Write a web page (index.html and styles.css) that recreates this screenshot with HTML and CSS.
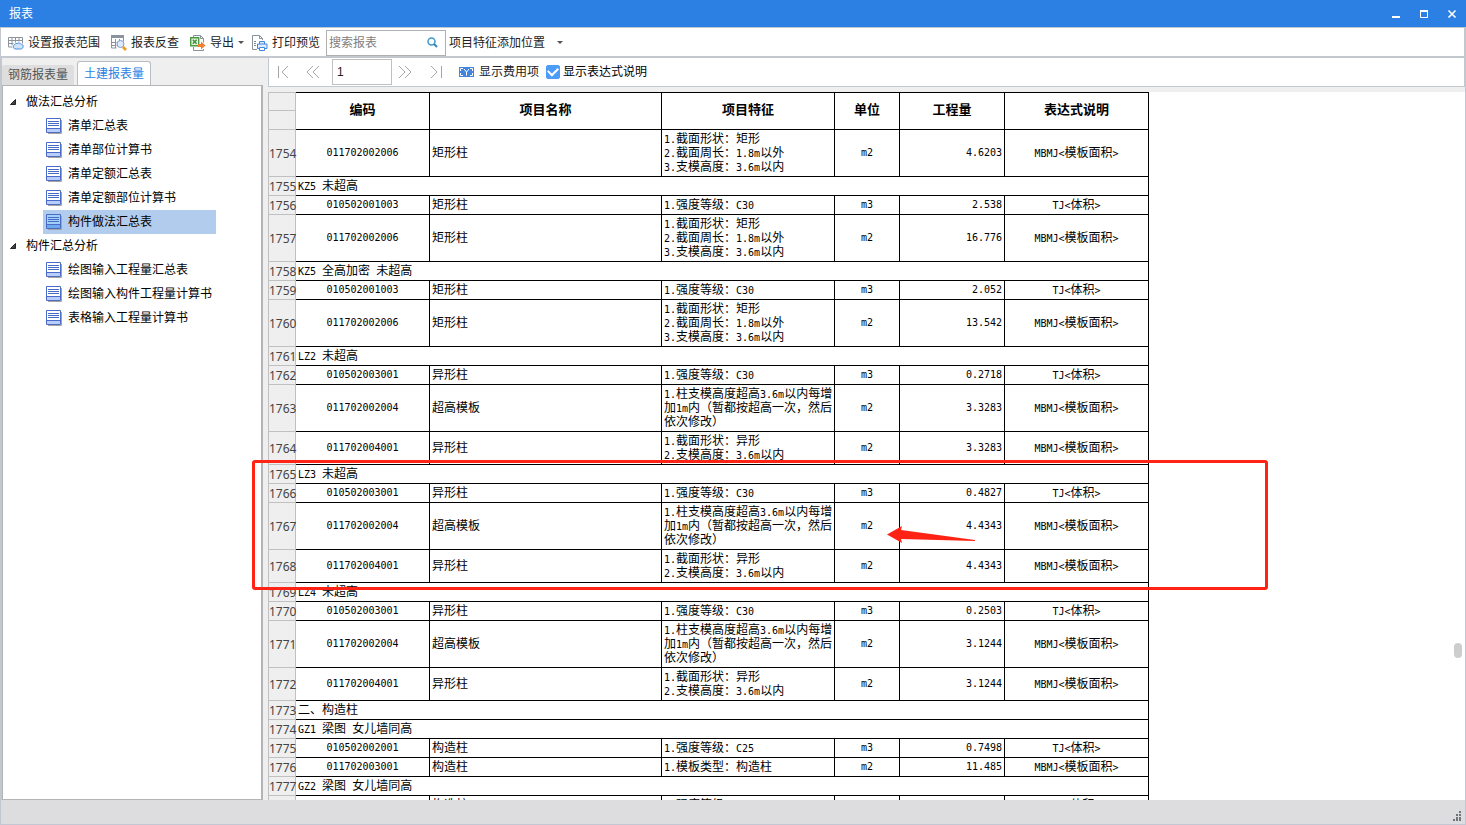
FILE: index.html
```html
<!DOCTYPE html>
<html lang="zh-CN">
<head>
<meta charset="utf-8">
<title>报表</title>
<link rel="stylesheet" href="styles.css">
</head>
<body>
<svg class="defs" aria-hidden="true">
  <symbol id="sheet" viewBox="0 0 16 16">
    <path d="M2 15.500h13.500V2" fill="none" stroke="#a4a4a4"/>
    <path class="sheet-page" d="M0 0h15v15H0z"/>
    <path class="sheet-foot" d="M1 10h13v4H1z"/>
    <path d="M.5.5h14v14H.5zM2 3.500h11M2 5.500h11M2 7.500h11M1 10.500h13" fill="none" stroke="#4a6cc4"/>
  </symbol>
</svg>
<div class="window">
  <header class="titlebar">
    <h1>报表</h1>
    <div class="window-buttons">
      <button type="button" aria-label="最小化"><svg width="10" height="10"><path d="M1 8h8" stroke="#fff" stroke-width="2"/></svg></button>
      <button type="button" aria-label="最大化"><svg width="10" height="10"><path d="M1.500 2v6.500h7V2" fill="none" stroke="#fff"/><path d="M1 2h8" stroke="#fff" stroke-width="2"/></svg></button>
      <button type="button" aria-label="关闭"><svg width="10" height="10"><path d="M1.500 1.500l7 7M8.500 1.500l-7 7" stroke="#fff" stroke-width="1.600"/></svg></button>
    </div>
  </header>

  <div class="toolbar">
    <button type="button" class="tool"><svg width="16" height="16"><path d="M.5 2.500h14v6M.5 2.500v9.500h4M.5 5.500h14M.5 8.500h5M4 2.500v8M7.500 2.500v5M11 2.500v4" fill="none" stroke="#8b949c"/><path d="M9 8.500c1.500-1 3-.6 3.500.5 2 .2 3 1.300 2.500 3-.3 1.500-1 2-2.500 2H8c-2 0-2.800-1-2.500-2.500.2-1.800 1.500-3 3.500-3z" fill="#cfe3fb" stroke="#4b8fdd"/></svg>设置报表范围</button>
    <button type="button" class="tool"><svg width="16" height="16"><path d="M.5 1.500h12v5M.5 1.500v11.500h5M.5 7.500h5M.5 10.500h5M4.500 4v9M8.500 4v2" fill="none" stroke="#8b949c"/><path d="M0 0h13v3H0z" fill="#8b949c"/><circle cx="9.500" cy="9" r="3.500" fill="#dcebff" stroke="#8798c8"/><path d="M12 12l3 3" stroke="#f19a1c" stroke-width="2.600"/></svg>报表反查</button>
    <button type="button" class="tool has-caret"><svg width="16" height="16"><path d="M3.500 3V.500h7l3 3v4M3.500 12v3.500h10V14M10.500.5v3h3" fill="none" stroke="#88929a"/><path d="M.7 2.700h8v8h-8z" fill="#e8f5e4" stroke="#4c9a41" stroke-width="1.400"/><path d="M2.800 4.700l3.800 4M6.600 4.700l-3.800 4" stroke="#3b9231" stroke-width="1.400"/><path d="M8 9h3V6.500l4.500 4-4.500 4V12H8z" fill="#f08030"/></svg>导出<span class="caret"></span></button>
    <button type="button" class="tool"><svg width="16" height="16"><path d="M5 14.500H.500v-14h7l3 3V5M7.500.5v3h3" fill="none" stroke="#88929a"/><path d="M3 6v5" stroke="#7d8790" stroke-dasharray="1 1" stroke-width="2"/><path d="M7.500 9V6.500h5V9M5.500 9h9.500v4.500H5.500z" fill="#dcebff" stroke="#3f86dc"/><path d="M7.500 12.500h5v3h-5z" fill="#fff" stroke="#3f86dc"/></svg>打印预览</button>
    <div class="search">
      <input type="text" placeholder="搜索报表" aria-label="搜索报表">
      <svg width="11" height="11"><circle cx="4.500" cy="4.500" r="3.500" fill="none" stroke="#4099cc" stroke-width="1.500"/><path d="M7 7l3 3" stroke="#3485b8" stroke-width="2"/></svg>
    </div>
    <button type="button" class="tool position-menu">项目特征添加位置<span class="caret"></span></button>
  </div>

  <main class="workspace">
    <aside class="sidebar">
      <div class="tabs" role="tablist">
        <button type="button" role="tab" aria-selected="false" class="tab">钢筋报表量</button>
        <button type="button" role="tab" aria-selected="true" class="tab active">土建报表量</button>
      </div>
      <nav class="tree">
        <h2><svg width="8" height="8"><path d="M6.500 1.500v5h-5z" fill="#444" stroke="#222"/></svg>做法汇总分析</h2>
        <ul>
          <li><a href="#"><svg width="16" height="16"><use href="#sheet"/></svg>清单汇总表</a></li>
          <li><a href="#"><svg width="16" height="16"><use href="#sheet"/></svg>清单部位计算书</a></li>
          <li><a href="#"><svg width="16" height="16"><use href="#sheet"/></svg>清单定额汇总表</a></li>
          <li><a href="#"><svg width="16" height="16"><use href="#sheet"/></svg>清单定额部位计算书</a></li>
          <li><a href="#" class="selected" aria-current="page"><svg width="16" height="16"><use href="#sheet"/></svg>构件做法汇总表</a></li>
        </ul>
        <h2><svg width="8" height="8"><path d="M6.500 1.500v5h-5z" fill="#444" stroke="#222"/></svg>构件汇总分析</h2>
        <ul>
          <li><a href="#"><svg width="16" height="16"><use href="#sheet"/></svg>绘图输入工程量汇总表</a></li>
          <li><a href="#"><svg width="16" height="16"><use href="#sheet"/></svg>绘图输入构件工程量计算书</a></li>
          <li><a href="#"><svg width="16" height="16"><use href="#sheet"/></svg>表格输入工程量计算书</a></li>
        </ul>
      </nav>
    </aside>

    <section class="report">
      <div class="pager">
        <button type="button" class="page-button" aria-label="首页"><svg width="14" height="14"><path d="M2.500 1v12M12 1L6 7l6 6" fill="none" stroke="#a6a6a6"/></svg></button>
        <button type="button" class="page-button" aria-label="上一页"><svg width="14" height="14"><path d="M7 1L1 7l6 6M13 1L7 7l6 6" fill="none" stroke="#a6a6a6"/></svg></button>
        <input class="page-number" type="text" value="1" aria-label="页码">
        <button type="button" class="page-button" aria-label="下一页"><svg width="14" height="14"><path d="M1 1l6 6-6 6M7 1l6 6-6 6" fill="none" stroke="#a6a6a6"/></svg></button>
        <button type="button" class="page-button" aria-label="末页"><svg width="14" height="14"><path d="M2 1l6 6-6 6M12.500 1v12" fill="none" stroke="#a6a6a6"/></svg></button>
        <button type="button" class="tool cost"><svg width="15" height="10"><path d="M0 0h15v10H0z" fill="#4285dc"/><path d="M4 1.500H1.500V4M1.500 6v2.500H4M11 1.500h2.500V4M13.500 6v2.500H11M5 2l2.500 3L10 2M7.500 5v3.500" fill="none" stroke="#fff"/></svg>显示费用项</button>
        <label class="check"><input type="checkbox" checked>显示表达式说明</label>
      </div>

      <div class="sheet-view">
        <table class="sheet">
          <colgroup><col class="c-row"><col class="c-code"><col class="c-name"><col class="c-feature"><col class="c-unit"><col class="c-amount"><col class="c-note"></colgroup>
          <thead>
            <tr><td class="row-no"></td><th rowspan="2">编码</th><th rowspan="2">项目名称</th><th rowspan="2">项目特征</th><th rowspan="2">单位</th><th rowspan="2">工程量</th><th rowspan="2">表达式说明</th></tr>
            <tr><td class="row-no"></td></tr>
          </thead>
          <tbody>
            <tr><td class="row-no">1754</td><td class="code">011702002006</td><td>矩形柱</td><td><span class="a">1.</span>截面形状：矩形<br><span class="a">2.</span>截面周长：<span class="a">1.8m</span>以外<br><span class="a">3.</span>支模高度：<span class="a">3.6m</span>以内</td><td class="unit">m2</td><td class="amount">4.6203</td><td class="note"><span class="a">MBMJ&lt;</span>模板面积<span class="a">&gt;</span></td></tr>
            <tr><td class="row-no">1755</td><td colspan="6"><span class="a">KZ5 </span>未超高</td></tr>
            <tr><td class="row-no">1756</td><td class="code">010502001003</td><td>矩形柱</td><td><span class="a">1.</span>强度等级：<span class="a">C30</span></td><td class="unit">m3</td><td class="amount">2.538</td><td class="note"><span class="a">TJ&lt;</span>体积<span class="a">&gt;</span></td></tr>
            <tr><td class="row-no">1757</td><td class="code">011702002006</td><td>矩形柱</td><td><span class="a">1.</span>截面形状：矩形<br><span class="a">2.</span>截面周长：<span class="a">1.8m</span>以外<br><span class="a">3.</span>支模高度：<span class="a">3.6m</span>以内</td><td class="unit">m2</td><td class="amount">16.776</td><td class="note"><span class="a">MBMJ&lt;</span>模板面积<span class="a">&gt;</span></td></tr>
            <tr><td class="row-no">1758</td><td colspan="6"><span class="a">KZ5 </span>全高加密<span class="a"> </span>未超高</td></tr>
            <tr><td class="row-no">1759</td><td class="code">010502001003</td><td>矩形柱</td><td><span class="a">1.</span>强度等级：<span class="a">C30</span></td><td class="unit">m3</td><td class="amount">2.052</td><td class="note"><span class="a">TJ&lt;</span>体积<span class="a">&gt;</span></td></tr>
            <tr><td class="row-no">1760</td><td class="code">011702002006</td><td>矩形柱</td><td><span class="a">1.</span>截面形状：矩形<br><span class="a">2.</span>截面周长：<span class="a">1.8m</span>以外<br><span class="a">3.</span>支模高度：<span class="a">3.6m</span>以内</td><td class="unit">m2</td><td class="amount">13.542</td><td class="note"><span class="a">MBMJ&lt;</span>模板面积<span class="a">&gt;</span></td></tr>
            <tr><td class="row-no">1761</td><td colspan="6"><span class="a">LZ2 </span>未超高</td></tr>
            <tr><td class="row-no">1762</td><td class="code">010502003001</td><td>异形柱</td><td><span class="a">1.</span>强度等级：<span class="a">C30</span></td><td class="unit">m3</td><td class="amount">0.2718</td><td class="note"><span class="a">TJ&lt;</span>体积<span class="a">&gt;</span></td></tr>
            <tr><td class="row-no">1763</td><td class="code">011702002004</td><td>超高模板</td><td><span class="a">1.</span>柱支模高度超高<span class="a">3.6m</span>以内每增<br>加<span class="a">1m</span>内（暂都按超高一次，然后<br>依次修改）</td><td class="unit">m2</td><td class="amount">3.3283</td><td class="note"><span class="a">MBMJ&lt;</span>模板面积<span class="a">&gt;</span></td></tr>
            <tr><td class="row-no">1764</td><td class="code">011702004001</td><td>异形柱</td><td><span class="a">1.</span>截面形状：异形<br><span class="a">2.</span>支模高度：<span class="a">3.6m</span>以内</td><td class="unit">m2</td><td class="amount">3.3283</td><td class="note"><span class="a">MBMJ&lt;</span>模板面积<span class="a">&gt;</span></td></tr>
            <tr><td class="row-no">1765</td><td colspan="6"><span class="a">LZ3 </span>未超高</td></tr>
            <tr><td class="row-no">1766</td><td class="code">010502003001</td><td>异形柱</td><td><span class="a">1.</span>强度等级：<span class="a">C30</span></td><td class="unit">m3</td><td class="amount">0.4827</td><td class="note"><span class="a">TJ&lt;</span>体积<span class="a">&gt;</span></td></tr>
            <tr><td class="row-no">1767</td><td class="code">011702002004</td><td>超高模板</td><td><span class="a">1.</span>柱支模高度超高<span class="a">3.6m</span>以内每增<br>加<span class="a">1m</span>内（暂都按超高一次，然后<br>依次修改）</td><td class="unit">m2</td><td class="amount">4.4343</td><td class="note"><span class="a">MBMJ&lt;</span>模板面积<span class="a">&gt;</span></td></tr>
            <tr><td class="row-no">1768</td><td class="code">011702004001</td><td>异形柱</td><td><span class="a">1.</span>截面形状：异形<br><span class="a">2.</span>支模高度：<span class="a">3.6m</span>以内</td><td class="unit">m2</td><td class="amount">4.4343</td><td class="note"><span class="a">MBMJ&lt;</span>模板面积<span class="a">&gt;</span></td></tr>
            <tr><td class="row-no">1769</td><td colspan="6"><span class="a">LZ4 </span>未超高</td></tr>
            <tr><td class="row-no">1770</td><td class="code">010502003001</td><td>异形柱</td><td><span class="a">1.</span>强度等级：<span class="a">C30</span></td><td class="unit">m3</td><td class="amount">0.2503</td><td class="note"><span class="a">TJ&lt;</span>体积<span class="a">&gt;</span></td></tr>
            <tr><td class="row-no">1771</td><td class="code">011702002004</td><td>超高模板</td><td><span class="a">1.</span>柱支模高度超高<span class="a">3.6m</span>以内每增<br>加<span class="a">1m</span>内（暂都按超高一次，然后<br>依次修改）</td><td class="unit">m2</td><td class="amount">3.1244</td><td class="note"><span class="a">MBMJ&lt;</span>模板面积<span class="a">&gt;</span></td></tr>
            <tr><td class="row-no">1772</td><td class="code">011702004001</td><td>异形柱</td><td><span class="a">1.</span>截面形状：异形<br><span class="a">2.</span>支模高度：<span class="a">3.6m</span>以内</td><td class="unit">m2</td><td class="amount">3.1244</td><td class="note"><span class="a">MBMJ&lt;</span>模板面积<span class="a">&gt;</span></td></tr>
            <tr><td class="row-no">1773</td><td colspan="6">二、构造柱</td></tr>
            <tr><td class="row-no">1774</td><td colspan="6"><span class="a">GZ1 </span>梁图<span class="a"> </span>女儿墙同高</td></tr>
            <tr><td class="row-no">1775</td><td class="code">010502002001</td><td>构造柱</td><td><span class="a">1.</span>强度等级：<span class="a">C25</span></td><td class="unit">m3</td><td class="amount">0.7498</td><td class="note"><span class="a">TJ&lt;</span>体积<span class="a">&gt;</span></td></tr>
            <tr><td class="row-no">1776</td><td class="code">011702003001</td><td>构造柱</td><td><span class="a">1.</span>模板类型：构造柱</td><td class="unit">m2</td><td class="amount">11.485</td><td class="note"><span class="a">MBMJ&lt;</span>模板面积<span class="a">&gt;</span></td></tr>
            <tr><td class="row-no">1777</td><td colspan="6"><span class="a">GZ2 </span>梁图<span class="a"> </span>女儿墙同高</td></tr>
            <tr><td class="row-no"></td><td class="code"></td><td>构造柱</td><td><span class="a">1.</span>强度等级：<span class="a">C25</span></td><td class="unit"></td><td class="amount"></td><td class="note"><span class="a">TJ&lt;</span>体积<span class="a">&gt;</span></td></tr>
          </tbody>
        </table>
        <div class="scroll-thumb"></div>
      </div>
      <div class="mark-box"></div>
      <svg class="mark-arrow" width="90" height="18"><path d="M0 8.500L15 0l-1 4 74 10v1L14 13l1 4z" fill="#ff2316"/></svg>
    </section>
  </main>

  <footer class="statusbar">
    <svg width="10" height="10"><path d="M7 1h2M4 4h2M7 4h2M4 7h2M7 7h2M1 9h2M4 9h2M7 9h2" stroke="#6e757c" stroke-width="2"/></svg>
  </footer>
</div>
</body>
</html>
```
FILE: styles.css
```css
* { box-sizing: border-box; }

body {
  margin: 0;
  font: 12px/16px "Liberation Sans", "Noto Sans CJK SC", sans-serif;
  color: #222;
}

button, input { font: inherit; color: inherit; }

button {
  padding: 0;
  border: 0;
  background: none;
}

svg { display: block; flex: none; }

.defs { position: absolute; width: 0; height: 0; }

.window {
  display: flex;
  flex-direction: column;
  height: 100vh;
  overflow: hidden;
  background: #efefef;
}

.titlebar {
  display: flex;
  justify-content: space-between;
  align-items: center;
  height: 27px;
  flex: none;
  padding: 0 9px;
  background: #2d80e3;
  color: #fff;
}

.titlebar h1 { margin: 0; font-size: 12px; font-weight: 400; }

.window-buttons { display: flex; gap: 18px; }

.toolbar {
  display: flex;
  align-items: center;
  height: 31px;
  flex: none;
  padding: 1px 7px 0;
  border: solid #c3c7ce;
  border-width: 1px 2px 2px 1px;
  background: #fff;
}

.tool {
  display: flex;
  align-items: center;
  gap: 4px;
  margin-right: 11px;
  white-space: nowrap;
}

.tool.has-caret { margin-right: 8px; }

.caret {
  border: 3px solid transparent;
  border-top-color: #555;
  border-bottom: 0;
}

.search {
  display: flex;
  align-items: center;
  width: 120px;
  height: 26px;
  margin: 0 3px 0 -5px;
  padding: 0 7px 0 2px;
  border: 1px solid #b0b0b0;
}

.search input {
  flex: 1;
  min-width: 0;
  padding: 0;
  border: 0;
  outline: 0;
}

.search input::placeholder { color: #808080; }

.position-menu { gap: 12px; }

.workspace { display: flex; flex: 1; min-height: 0; }

.sidebar {
  display: flex;
  flex-direction: column;
  width: 263px;
  flex: none;
  border-left: 2px solid #c3c7ce;
}

.tabs {
  display: flex;
  align-items: flex-end;
  gap: 3px;
  height: 27px;
}

.tab {
  height: 20px;
  padding: 0 6px;
  border-radius: 3px 3px 0 0;
  background: #dedede;
  color: #555;
}

.tab.active {
  height: 24px;
  border: 1px solid #b9bdc4;
  border-bottom: 0;
  background: #fff;
  color: #2d80e3;
}

.tree {
  flex: 1;
  padding: 4px 0 0 6px;
  border: solid #b4b4b8;
  border-width: 1px 2px 1px 1px;
  background: #fff;
  color: #000;
}

.tree h2 {
  display: flex;
  align-items: center;
  gap: 9px;
  height: 24px;
  margin: 0;
  font-size: 12px;
  font-weight: 400;
}

.tree ul {
  width: fit-content;
  min-width: 173px;
  margin: 0 0 0 34px;
  padding: 0;
  list-style: none;
}

.tree a {
  display: flex;
  align-items: center;
  gap: 6px;
  height: 24px;
  padding: 0 4px 0 3px;
  color: inherit;
  text-decoration: none;
}

.tree a.selected {
  --page: #9fd0f8;
  --foot: #6ea8ee;
  background: #b1ccec;
}

.sheet-page { fill: var(--page, #fff); }
.sheet-foot { fill: var(--foot, #b9ccff); }

.report {
  position: relative;
  display: flex;
  flex-direction: column;
  flex: 1;
  min-width: 0;
  padding-left: 5px;
  border-right: 1px solid #c3c7d4;
}

.pager {
  display: flex;
  align-items: center;
  height: 29px;
  flex: none;
  border: solid #c3c7ce;
  border-width: 0 1px 1px 1px;
  background: #fff;
}

.page-button {
  display: grid;
  place-items: center;
  width: 31px;
  height: 24px;
}

.page-button:first-child { width: 28px; }

.page-number {
  width: 60px;
  height: 26px;
  margin: 0 -3px 0 4px;
  padding: 0 4px;
  border: 1px solid #c0c0c0;
}

.tool.cost { margin: 0 7px 0 8px; gap: 5px; }

.check { display: flex; align-items: center; gap: 3px; color: #000; }

.check input {
  display: grid;
  place-items: center;
  width: 14px;
  height: 14px;
  margin: 0;
  appearance: none;
  border: 1px solid #4d9df8;
  border-radius: 2px;
}

.check input:checked { background: #4d9df8; }

.check input:checked::after {
  content: "";
  width: 8px;
  height: 5px;
  margin-bottom: 3px;
  border: solid #fff;
  border-width: 0 0 2px 2px;
  transform: rotate(-45deg);
}

.sheet-view {
  position: relative;
  flex: 1;
  min-height: 0;
  margin-top: 5px;
  overflow: hidden;
  background: #fff;
}

.sheet {
  width: 881px;
  table-layout: fixed;
  border-collapse: separate;
  border-spacing: 0;
  color: #000;
  line-height: 14px;
}

.c-row { width: 28px; }
.c-code { width: 134px; }
.c-name { width: 232px; }
.c-feature { width: 173px; }
.c-unit { width: 65px; }
.c-amount { width: 105px; }
.c-note { width: 144px; }

.sheet td, .sheet th {
  padding: 2px;
  border: solid #000;
  border-width: 0 1px 1px 0;
  white-space: nowrap;
}

.sheet th {
  padding-bottom: 4px;
  border-top-width: 1px;
  font-size: 13px;
}

.sheet td.row-no {
  padding: 3px 0 1px;
  border-color: #c0c0c0;
  border-left-width: 1px;
  background: #efefef;
  color: #444;
  font-family: "Noto Sans", sans-serif;
}

.sheet thead .row-no { height: 19px; }
.sheet thead tr:first-child .row-no { border-top-width: 1px; }

.sheet .code, .sheet .unit, .sheet .note { text-align: center; }
.sheet .amount { text-align: right; }

.sheet .code, .sheet .unit, .sheet .amount, .a {
  font-family: "DejaVu Sans Mono", monospace;
  font-size: 10px;
}

.a { line-height: 10px; white-space: pre; }

.scroll-thumb {
  position: absolute;
  top: 551px;
  right: 3px;
  width: 8px;
  height: 15px;
  border-radius: 4px;
  background: #cdcdcd;
}

.mark-box {
  position: absolute;
  top: 402px;
  left: -11px;
  width: 1016px;
  height: 130px;
  border: 3px solid #ff2316;
  border-radius: 3px;
}

.mark-arrow { position: absolute; top: 468px; left: 624px; }

.statusbar {
  display: flex;
  justify-content: flex-end;
  align-items: flex-end;
  height: 25px;
  flex: none;
  padding: 0 3px 3px 0;
  border: solid #c3c7d4;
  border-width: 0 1px 1px 1px;
  background: #dddddf;
}
```
